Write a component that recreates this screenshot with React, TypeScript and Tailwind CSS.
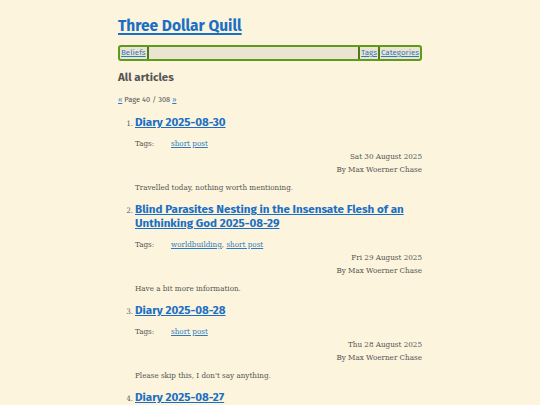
const heading = { fontFamily: '"Fira Sans", "Noto Sans", "Open Sans", sans-serif' }
const body = { fontFamily: '"Roboto Slab", "DejaVu Serif Condensed", "DejaVu Serif", serif' }

type Article = {
  title: string
  tags: string[]
  date: string
  summary: string
}

const articles: Article[] = [
  {
    title: 'Diary 2025-08-30',
    tags: ['short post'],
    date: 'Sat 30 August 2025',
    summary: 'Travelled today, nothing worth mentioning.',
  },
  {
    title: 'Blind Parasites Nesting in the Insensate Flesh of an Unthinking God 2025-08-29',
    tags: ['worldbuilding', 'short post'],
    date: 'Fri 29 August 2025',
    summary: 'Have a bit more information.',
  },
  {
    title: 'Diary 2025-08-28',
    tags: ['short post'],
    date: 'Thu 28 August 2025',
    summary: "Please skip this, I don't say anything.",
  },
  {
    title: 'Diary 2025-08-27',
    tags: ['short post'],
    date: 'Wed 27 August 2025',
    summary: 'Nothing much.',
  },
]

function Sep() {
  return <span className="mx-[1px] inline-block h-[12px] w-[2px] bg-[#4f7a16]" />
}

export default function App() {
  return (
    <div className="h-[405px] overflow-hidden bg-[#fcf4dc] text-[#555]" style={body}>
      <div className="mx-auto w-[304px] pt-[15px]">
        <h1 className="text-[15.5px] font-bold leading-[22px]" style={heading}>
          <a href="#" className="text-[#1a6fc4] underline decoration-[1.5px] underline-offset-2">
            Three Dollar Quill
          </a>
        </h1>

        <nav
          className="mt-[8px] flex h-[16px] items-center rounded-[3px] border-2 border-[#5e9a1c] bg-[#ebe4d0] px-[1px] text-[8px]"
          style={heading}
        >
          <a href="#" className="text-[#2f7bc0] underline">Beliefs</a>
          <Sep />
          <span className="flex-1" />
          <Sep />
          <a href="#" className="text-[#2f7bc0] underline">Tags</a>
          <Sep />
          <a href="#" className="text-[#2f7bc0] underline">Categories</a>
        </nav>

        <h2 className="mt-[7px] text-[11.5px] font-bold leading-[18px] text-[#555]" style={heading}>
          All articles
        </h2>

        <p className="mt-[9px] text-[7.5px] leading-[10px]" style={heading}>
          <a href="#" className="text-[#2f7bc0] underline">«</a> Page 40 / 308{' '}
          <a href="#" className="text-[#2f7bc0] underline">»</a>
        </p>

        <ol className="mt-[10px] list-decimal pl-[17px] marker:text-[7.5px]">
          {articles.map((a) => (
            <li key={a.title} className="mb-[9.5px]">
              <h3 className="text-[11.6px] font-bold leading-[14px]" style={heading}>
                <a href="#" className="text-[#1a6fc4] underline decoration-1 underline-offset-1">
                  {a.title}
                </a>
              </h3>
              <div className="mt-[10px] flex text-[8px] leading-[10px]">
                <span className="w-[36px]">Tags:</span>
                <span>
                  {a.tags.map((t, i) => (
                    <span key={t}>
                      {i > 0 && ', '}
                      <a href="#" className="text-[#2f7bc0] underline">{t}</a>
                    </span>
                  ))}
                </span>
              </div>
              <div className="mt-[1px] text-right text-[8px] leading-[13px]">
                <div>{a.date}</div>
                <div>By Max Woerner Chase</div>
              </div>
              <p className="mt-[6.5px] text-[8px] leading-[10px]">{a.summary}</p>
            </li>
          ))}
        </ol>
      </div>
    </div>
  )
}
